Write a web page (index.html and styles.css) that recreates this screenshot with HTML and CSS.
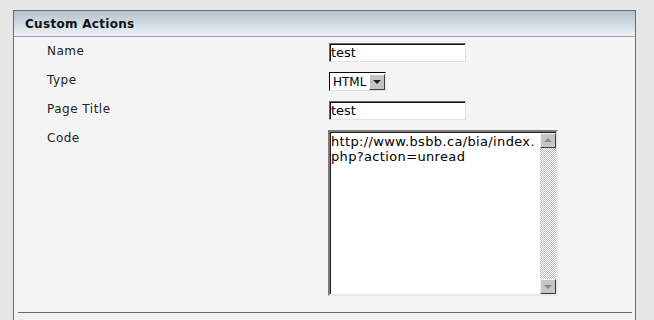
FILE: index.html
```html
<!DOCTYPE html>
<html lang="en">
<head>
    <meta charset="UTF-8">
    <meta name="viewport" content="width=device-width, initial-scale=1.0">
    <title>Custom Actions</title>
    <link rel="stylesheet" href="styles.css">
</head>
<body>
    <div class="panel">
        <div class="panel-head">Custom Actions</div>
        <form class="panel-body">
            <label class="field-label" for="name">Name</label>
            <div class="field">
                <input type="text" id="name" class="text-input" value="test">
            </div>

            <label class="field-label" for="type">Type</label>
            <div class="field">
                <span class="select-box">
                    <select id="type">
                        <option value="html">HTML</option>
                    </select>
                    <span class="select-arrow"></span>
                </span>
            </div>

            <label class="field-label" for="pageTitle">Page Title</label>
            <div class="field">
                <input type="text" id="pageTitle" class="text-input" value="test">
            </div>

            <label class="field-label" for="code">Code</label>
            <div class="field">
                <div class="code-box">
                    <textarea id="code">http://www.bsbb.ca/bia/index.php?action=unread</textarea>
                    <div class="scrollbar">
                        <span class="sb-btn sb-up"></span>
                        <span class="sb-track"></span>
                        <span class="sb-btn sb-down"></span>
                    </div>
                </div>
            </div>
        </form>
        <div class="panel-foot"></div>
    </div>
</body>
</html>
```

FILE: styles.css
```css
body {
    font-family: "DejaVu Sans", Verdana, sans-serif;
    background-color: #e6e6e6;
    margin: 0;
    padding: 10px 18px 0 13px;
    color: #111;
}

.panel {
    background: #f4f4f4;
    border: 1px solid #6a6a6a;
    border-bottom: none;
    min-height: 320px;
}

.panel-head {
    height: 25px;
    padding-left: 11px;
    border-bottom: 1px solid #9aa6b2;
    background: linear-gradient(#b9c2cb, #cbd5df 40%, #eef2f6);
    font-size: 12px;
    font-weight: bold;
    letter-spacing: 0.3px;
    line-height: 26px;
    color: #111;
}

.panel-body {
    display: grid;
    grid-template-columns: 281px 1fr;
    row-gap: 10px;
    padding: 6px 0 0 33px;
    margin: 0;
}

.field-label {
    font-size: 12px;
    letter-spacing: 0.5px;
    line-height: 15px;
    padding-top: 1px;
    color: #222;
}

.field {
    display: flex;
}

.text-input {
    box-sizing: border-box;
    width: 137px;
    height: 19px;
    margin: 0 0 0 1px;
    padding: 0 1px;
    border: 1px solid;
    border-color: #6a6a6a #e2e2e2 #e2e2e2 #6a6a6a;
    box-shadow: inset 1px 1px 0 #111;
    background: #fff;
    font-family: "DejaVu Sans", Verdana, sans-serif;
    font-size: 13px;
    color: #000;
    outline: none;
}

.select-box {
    display: inline-flex;
    align-items: center;
    box-sizing: border-box;
    height: 19px;
    margin-left: 1px;
    border: 1px solid;
    border-color: #000 #e0e0e0 #e0e0e0 #000;
    background: #fff;
}

.select-box select {
    appearance: none;
    -webkit-appearance: none;
    border: none;
    background: #fff;
    width: 39px;
    height: 16px;
    padding: 0 0 0 3px;
    margin: 0;
    font-family: "DejaVu Sans", Verdana, sans-serif;
    font-size: 12px;
    color: #000;
    outline: none;
}

.select-arrow {
    position: relative;
    box-sizing: border-box;
    width: 16px;
    height: 16px;
    background: #c4c4c4;
    border: 1px solid;
    border-color: #fff #404040 #404040 #fff;
}

.select-arrow::after {
    content: "";
    position: absolute;
    left: 3px;
    top: 5px;
    border-left: 4px solid transparent;
    border-right: 4px solid transparent;
    border-top: 4px solid #222;
}

.code-box {
    display: flex;
    box-sizing: border-box;
    width: 230px;
    height: 166px;
    border: 2px solid;
    border-color: #7a7a7a #e8e8e8 #e8e8e8 #7a7a7a;
    box-shadow: inset 1px 1px 0 #202020;
    background: #fff;
}

.code-box textarea {
    flex: 1;
    border: none;
    resize: none;
    overflow: hidden;
    margin: 0;
    padding: 2px 1px 0 1px;
    background: transparent;
    font-family: "DejaVu Sans", Verdana, sans-serif;
    font-size: 13px;
    letter-spacing: 0.35px;
    line-height: 15px;
    word-break: break-all;
    color: #000;
    outline: none;
}

.scrollbar {
    display: flex;
    flex-direction: column;
    width: 16px;
    padding-top: 1px;
}

.sb-track {
    flex: 1;
    background: repeating-conic-gradient(#bdbdbd 0 25%, #fff 0 50%) 0 0 / 2px 2px;
}

.sb-btn {
    position: relative;
    box-sizing: border-box;
    height: 15px;
    background: #c6c6c6;
    border: 1px solid;
    border-color: #f0f0f0 #3a3a3a #3a3a3a #f0f0f0;
}

.sb-btn::after {
    content: "";
    position: absolute;
    left: 3px;
    border-left: 4px solid transparent;
    border-right: 4px solid transparent;
}

.sb-up::after {
    top: 4px;
    border-bottom: 4px solid #8a8a8a;
}

.sb-down::after {
    top: 5px;
    border-top: 4px solid #8a8a8a;
}

.panel-foot {
    margin: 16px 3px 0 4px;
    height: 10px;
    border-top: 1px solid #6c6c6c;
    background: #f1f1f1;
}
```
